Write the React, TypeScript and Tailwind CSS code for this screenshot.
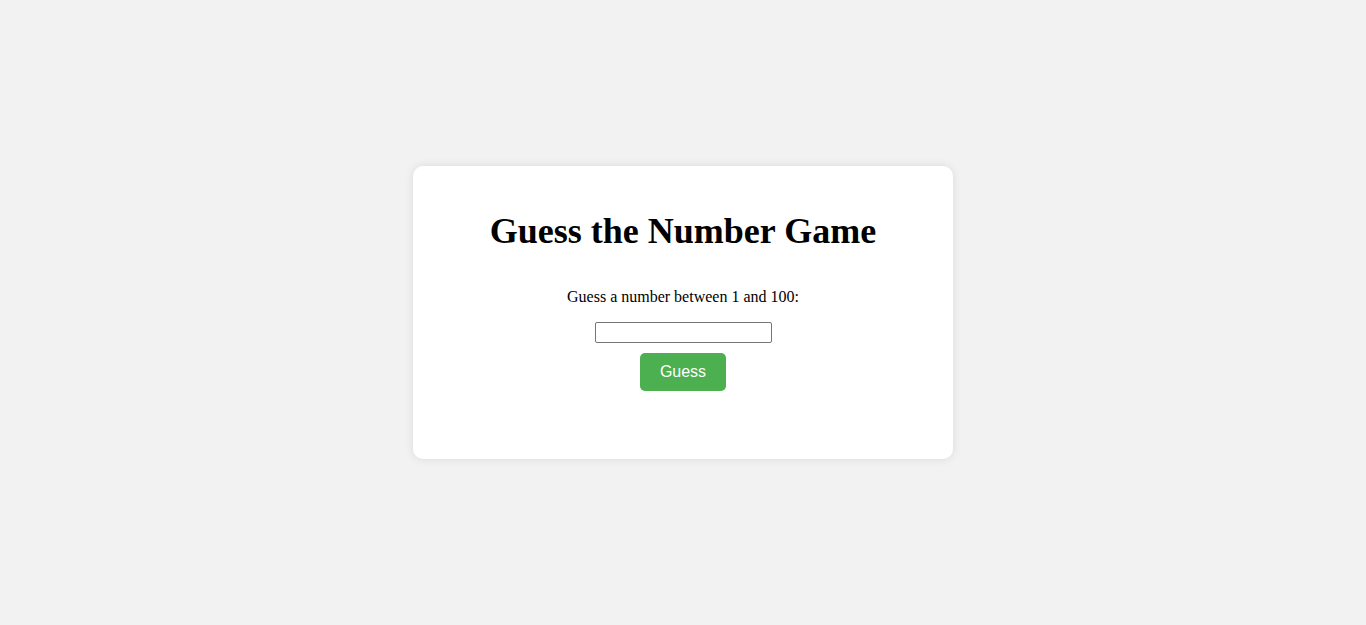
import { useState } from "react";

const serif = "font-['Liberation_Serif','Times_New_Roman',serif]";

const App = () => {
  const [guess, setGuess] = useState("");

  return (
    <div className={`flex h-screen w-full items-center justify-center bg-[#f2f2f2] ${serif} text-black`}>
      <div className="flex w-[540px] flex-col items-center rounded-[10px] bg-white px-5 pt-[45px] pb-[68px] shadow-[0_0_10px_rgba(0,0,0,0.1)]">
        <h1 className="text-[36px] leading-[40px] font-bold">Guess the Number Game</h1>
        <p className="mt-[37px] text-[16px] leading-[18px]">Guess a number between 1 and 100:</p>
        <input
          type="number"
          value={guess}
          onChange={(e) => setGuess(e.target.value)}
          className="mt-[16px] h-[21px] w-[177px] rounded-[2px] border border-[#767676] bg-white px-[2px] font-['Liberation_Sans',Arial,sans-serif] text-[13.33px] outline-none [appearance:textfield]"
        />
        <button className="mt-[10px] h-[38px] rounded-[5px] bg-[#4caf50] px-5 font-['Liberation_Sans',Arial,sans-serif] text-[16px] leading-[18px] text-white">
          Guess
        </button>
      </div>
    </div>
  );
};

export default App;
